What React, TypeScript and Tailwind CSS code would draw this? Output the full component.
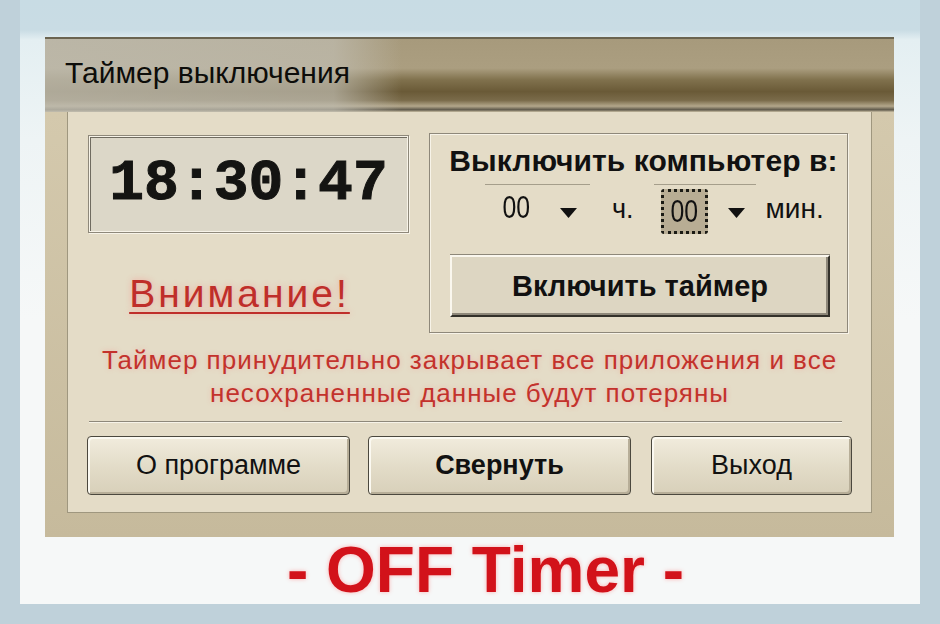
import React from 'react';

const sans = "font-['Liberation_Sans',Arial,sans-serif]";

function ComboArrow() {
  return (
    <svg width="17" height="11" viewBox="0 0 17 11" className="block">
      <path d="M0 1h17L8.5 11z" fill="#111" />
    </svg>
  );
}

function Digits({ value }: { value: string }) {
  return (
    <span className="inline-block origin-center scale-x-[0.8] text-[31px] leading-none text-[#111]">
      {value}
    </span>
  );
}

function ShutdownBox() {
  return (
    <div className="w-[419px] h-[200px] border border-[#8e887a] shadow-[inset_1px_1px_0_#f7f3e8,1px_1px_0_#f7f3e8] pt-[12px] flex flex-col">
      <div className="text-center text-[30px] leading-none font-bold text-[#111] tracking-[0.1px] pl-[10px]">
        Выключить компьютер в:
      </div>

      {/* hours / minutes pickers */}
      <div className="flex items-start pl-[55px] mt-[8px]">
        <div className="w-[105px] h-[50px] border-t border-[#a59e8b] flex items-center">
          <div className="w-[28px] ml-[17px] flex justify-center -mt-[4px]">
            <Digits value="00" />
          </div>
          <div className="ml-[30px] mt-[6px]">
            <ComboArrow />
          </div>
        </div>
        <div className="ml-[22px] h-[50px] flex items-center text-[27px] leading-none text-[#111]">ч.</div>
        <div className="ml-[20px] w-[102px] h-[50px] border-t border-[#a59e8b] flex items-center">
          <div className="ml-[7px] mt-[3px] w-[47px] h-[45px] bg-[#b8ad94] border-[3px] border-dotted border-[#1a1a14] rounded-[3px] flex items-center justify-center">
            <Digits value="00" />
          </div>
          <div className="ml-[20px] mt-[6px]">
            <ComboArrow />
          </div>
        </div>
        <div className="ml-[10px] h-[50px] flex items-center text-[28px] leading-none text-[#111]">мин.</div>
      </div>

      <button className="ml-[20px] mt-[21px] w-[380px] h-[62px] bg-[#ddd6c2] border-2 border-t-[#faf7ee] border-l-[#faf7ee] border-r-[#33312a] border-b-[#33312a] shadow-[inset_-2px_-2px_0_#8e887a,0_-1px_0_#8e887a] flex items-center justify-center text-[29px] font-bold text-[#111] leading-none">
        Включить таймер
      </button>
    </div>
  );
}

function WinButton({ label, width, bold }: { label: string; width: string; bold?: boolean }) {
  return (
    <button
      className={`${width} h-[59px] rounded-[4px] border border-[#4b483e] bg-[linear-gradient(to_bottom,#f1ecdd,#e2dbc7_55%,#d8d0ba)] shadow-[inset_2px_2px_0_#fbf9f1,inset_-2px_-2px_0_#b7ae98] flex items-center justify-center text-[27px] leading-none text-[#111] ${
        bold ? 'font-bold' : ''
      }`}
    >
      {label}
    </button>
  );
}

function TimerWindow() {
  return (
    <div className="w-[849px] h-[500px] flex flex-col bg-[#d2c7ab]">
      {/* caption */}
      <div className="h-[75px] shrink-0 border-t-2 border-[#6b6450] bg-[image:linear-gradient(to_right,rgba(192,189,177,0.8)_0%,rgba(192,189,177,0.7)_34%,rgba(192,189,177,0)_42%),linear-gradient(to_bottom,#a79a7c_0%,#ab9e80_40%,#80714d_56%,#6a5a37_72%,#7a6b4a_84%,#b3a78b_92%,#5e584a_97%,#c9bea3_100%)] pl-[20px] pt-[19px]">
        <div className="text-[30px] leading-none text-[#0d0d0a]">Таймер выключения</div>
      </div>

      <div className="flex-1 px-[22px] pb-[24px] flex flex-col bg-[linear-gradient(to_bottom,#d4c9ad,#c6ba9c)]">
        <div className="flex-1 bg-[#e4dcc7] border-l border-b border-[#9f977f] border-r border-r-[#9f977f] pt-[21px] flex flex-col">
          <div className="flex pl-[20px]">
            <div className="w-[321px] flex flex-col">
              <div className="mt-[2px] h-[98px] border border-[#8e887a] shadow-[1px_1px_0_#f7f3e8]">
                <div className="h-full border border-[#f7f3e8] bg-[#dcd7c8] shadow-[inset_1px_1px_0_#6f6b60] flex items-center justify-center">
                  <span className="font-['Liberation_Mono',monospace] font-bold text-[58px] leading-none text-[#141412] [-webkit-text-stroke:1px_#141412]">
                    18:30:47
                  </span>
                </div>
              </div>
              <div className="mt-[41px] flex justify-center pr-[18px]">
                <span className="text-[39px] leading-none tracking-[3px] text-[#bf2e2a] underline decoration-2 underline-offset-[5px] [text-shadow:0_0_6px_rgba(255,110,110,0.45)]">
                  Внимание!
                </span>
              </div>
            </div>
            <div className="ml-[20px]">
              <ShutdownBox />
            </div>
          </div>

          <div className="mt-[11px] text-center text-[26px] leading-[33px] tracking-[1px] text-[#c3322c] [text-shadow:0_0_5px_rgba(255,120,120,0.35)]">
            Таймер принудительно закрывает все приложения и все
            <br />
            несохраненные данные будут потеряны
          </div>

          <div className="mt-[11px] ml-[21px] mr-[29px] border-t border-[#8e887a] border-b border-b-[#f7f3e8]" />

          <div className="mt-[13px] flex pl-[19px]">
            <WinButton label="О программе" width="w-[263px]" />
            <div className="ml-[18px]">
              <WinButton label="Свернуть" width="w-[263px]" bold />
            </div>
            <div className="ml-[20px]">
              <WinButton label="Выход" width="w-[201px]" />
            </div>
          </div>
        </div>
      </div>
    </div>
  );
}

export default function App() {
  return (
    <div className={`w-[940px] h-[624px] bg-[#bfd1da] px-[20px] pb-[20px] ${sans}`}>
      <div className="h-full flex flex-col pl-[25px] pr-[26px] pt-[37px] bg-[linear-gradient(to_bottom,#c8dce4_0px,#c9dce4_30px,#e4eff2_40px,#eef4f5_140px,#f6f8f8_320px)]">
        <TimerWindow />
        <div className="flex-1 flex justify-center pl-[32px] pt-[1px]">
          <span className="text-[64px] font-bold leading-none text-[#d2121a] [text-shadow:0_0_4px_rgba(255,90,90,0.45)]">
            - OFF Timer -
          </span>
        </div>
      </div>
    </div>
  );
}
